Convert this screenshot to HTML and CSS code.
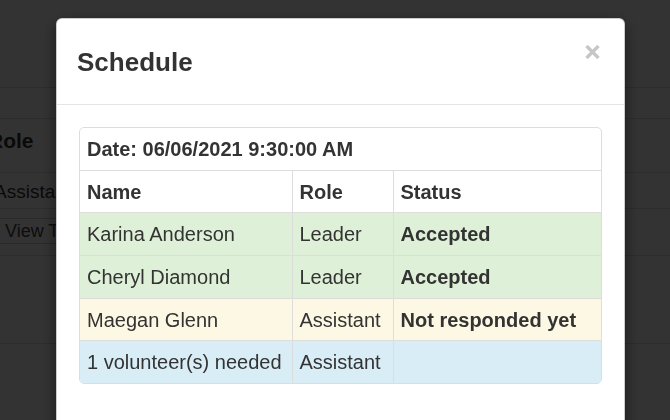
FILE: index.html
```html
<!DOCTYPE html>
<html>
    <head>
        <meta charset="UTF-8" />
        <meta name="viewport" content="width=device-width, initial-scale=1.0" />
        <title>Schedule</title>
        <link rel="stylesheet" href="styles.css">
    </head>
    <body>
        <div class="page">
            <div class="topBar"></div>
            <div class="bgRow spacer"></div>
            <div class="bgRow head">Role</div>
            <div class="bgRow cell">Assistant</div>
            <div class="bgRow actions">
                <span class="bgButton">View Team</span>
            </div>
            <div class="bgRow tail"></div>
        </div>

        <div class="backdrop"></div>

        <div class="modalWrap">
            <div class="modal">
                <div class="modalHeader">
                    <h4 class="modalTitle">Schedule</h4>
                    <button class="close" aria-label="Close">
                        <svg width="15" height="14" viewBox="0 0 15 14">
                            <path d="M1.5 1 L13.5 13 M13.5 1 L1.5 13" stroke="#c6c6c6" stroke-width="3.4" fill="none" />
                        </svg>
                    </button>
                </div>
                <div class="modalBody">
                    <div class="tableBox">
                        <table class="schedule">
                            <colgroup>
                                <col class="colName" />
                                <col class="colRole" />
                                <col />
                            </colgroup>
                            <tr>
                                <th colspan="3">Date: 06/06/2021 9:30:00 AM</th>
                            </tr>
                            <tr>
                                <th>Name</th>
                                <th>Role</th>
                                <th>Status</th>
                            </tr>
                            <tr class="success">
                                <td>Karina Anderson</td>
                                <td>Leader</td>
                                <td><b>Accepted</b></td>
                            </tr>
                            <tr class="success">
                                <td>Cheryl Diamond</td>
                                <td>Leader</td>
                                <td><b>Accepted</b></td>
                            </tr>
                            <tr class="warning">
                                <td>Maegan Glenn</td>
                                <td>Assistant</td>
                                <td><b>Not responded yet</b></td>
                            </tr>
                            <tr class="info">
                                <td>1 volunteer(s) needed</td>
                                <td>Assistant</td>
                                <td></td>
                            </tr>
                        </table>
                    </div>
                </div>
            </div>
        </div>
    </body>
</html>
```

FILE: styles.css
```css
*,
*::before,
*::after {
    box-sizing: border-box;
}

html,
body {
    margin: 0;
    padding: 0;
    height: 100%;
    overflow: hidden;
    font-family: "Liberation Sans", Arial, sans-serif;
    color: #333;
    background: #fff;
}

/* page behind the dialog */
.page {
    margin-left: -12px;
}

.topBar {
    height: 88px;
    border-bottom: 1px solid #ddd;
}

.bgRow {
    display: flex;
    align-items: center;
    border-bottom: 1px solid #ddd;
}

.spacer {
    height: 31px;
}

.head {
    height: 54px;
    font-size: 21px;
    font-weight: bold;
    padding-bottom: 10px;
}

.cell {
    height: 36px;
    font-size: 19px;
    padding-left: 6px;
    padding-top: 2px;
}

.actions {
    height: 47px;
    align-items: flex-start;
    padding-top: 9px;
    padding-left: 0;
}

.bgButton {
    display: inline-block;
    height: 26px;
    line-height: 24px;
    font-size: 18px;
    padding: 0 8px 0 16px;
    border: 1px solid #ccc;
    border-radius: 3px;
    color: #444;
}

.tail {
    height: 88px;
}

.backdrop {
    position: fixed;
    inset: 0;
    background: rgba(0, 0, 0, 0.8);
}

/* dialog */
.modalWrap {
    position: fixed;
    inset: 0;
    padding: 18px 0 0 56px;
}

.modal {
    width: 569px;
    height: 480px;
    background: #fff;
    border: 1px solid rgba(0, 0, 0, 0.2);
    border-radius: 6px;
    box-shadow: 0 5px 15px rgba(0, 0, 0, 0.5);
}

.modalHeader {
    display: flex;
    justify-content: space-between;
    align-items: flex-start;
    padding: 29px 20px 27px;
    border-bottom: 1px solid #e5e5e5;
}

.modalTitle {
    margin: 0;
    font-size: 26px;
    line-height: 29px;
    font-weight: bold;
    color: #333;
}

.close {
    display: flex;
    padding: 0;
    margin: -3px 4px 0 0;
    border: none;
    background: none;
    cursor: pointer;
}

.modalBody {
    padding: 22px;
}

.tableBox {
    border: 1px solid #ddd;
    border-radius: 5px;
    overflow: hidden;
}

.schedule {
    width: 100%;
    border-collapse: collapse;
    table-layout: fixed;
    font-size: 20px;
}

.colName {
    width: 212px;
}

.colRole {
    width: 101px;
}

.schedule th,
.schedule td {
    padding: 9px 8px 7px 7px;
    line-height: 25.67px;
    text-align: left;
    white-space: nowrap;
    border: 1px solid #ddd;
}

.schedule tr:first-child th {
    border-top: none;
}

.schedule tr:last-child td {
    border-bottom: none;
}

.schedule th:first-child,
.schedule td:first-child {
    border-left: none;
}

.schedule th:last-child,
.schedule td:last-child {
    border-right: none;
}

.schedule th {
    font-weight: bold;
}

.success td {
    background: #dff0d8;
}

.warning td {
    background: #fcf8e3;
}

.info td {
    background: #d9edf7;
}
```
